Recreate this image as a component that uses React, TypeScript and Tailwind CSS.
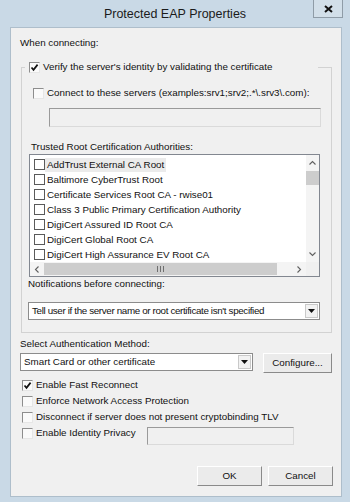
import React from "react";

const certs = [
  "AddTrust External CA Root",
  "Baltimore CyberTrust Root",
  "Certificate Services Root CA - rwise01",
  "Class 3 Public Primary Certification Authority",
  "DigiCert Assured ID Root CA",
  "DigiCert Global Root CA",
  "DigiCert High Assurance EV Root CA",
];

function Tick() {
  return (
    <svg width="9" height="9" viewBox="0 0 9 9">
      <path d="M1.5 4.5 L3.5 6.8 L7.6 1.6" fill="none" stroke="#111" strokeWidth="1.7" />
    </svg>
  );
}

// sunken classic checkbox
function Check({ checked }: { checked?: boolean }) {
  return (
    <span className="flex h-[11px] w-[11px] shrink-0 items-center justify-center border border-t-[#8d8d8d] border-l-[#8d8d8d] border-r-[#e6e6e6] border-b-[#e6e6e6] bg-[#fafafa]">
      {checked && <Tick />}
    </span>
  );
}

function FlatCheck() {
  return <span className="h-[11px] w-[11px] shrink-0 border border-[#5a5a5a] bg-white" />;
}

function Chevron({ dir }: { dir: "up" | "down" | "left" | "right" }) {
  const d = {
    up: "M0.5 4.5 L3.5 1.5 L6.5 4.5",
    down: "M0.5 1.5 L3.5 4.5 L6.5 1.5",
    left: "M4.5 0.5 L1.5 3.5 L4.5 6.5",
    right: "M1.5 0.5 L4.5 3.5 L1.5 6.5",
  }[dir];
  const vertical = dir === "up" || dir === "down";
  return (
    <svg width={vertical ? 7 : 6} height={vertical ? 6 : 7} viewBox={vertical ? "0 0 7 6" : "0 0 6 7"}>
      <path d={d} fill="none" stroke="#606060" strokeWidth="1.1" />
    </svg>
  );
}

function Combo({ text, width, tight }: { text: string; width: string; tight?: boolean }) {
  return (
    <div className={`flex h-[18px] ${width} items-center border border-[#8c8c8c] bg-white p-[1px]`}>
      <span className={tight ? "flex-1 truncate pl-[2px] tracking-[-0.35px]" : "flex-1 truncate pl-[2px]"}>{text}</span>
      <span className="flex h-full w-[13px] items-center justify-center border border-[#c9c9c9] bg-[#f2f2f2]">
        <svg width="7" height="4" viewBox="0 0 7 4">
          <path d="M0 0 H7 L3.5 4 Z" fill="#111" />
        </svg>
      </span>
    </div>
  );
}

function Button({ label, width }: { label: string; width: string }) {
  return (
    <div className={`flex h-[20px] ${width} items-center justify-center border border-t-white border-l-white border-r-[#8a8a8a] border-b-[#8a8a8a] bg-[#ebebeb]`}>
      {label}
    </div>
  );
}

export default function App() {
  return (
    <div className="flex h-[502px] w-[350px] flex-col overflow-hidden bg-[#c9d9e6] font-['Liberation_Sans',Arial,sans-serif] text-[9.8px] leading-[14px] text-[#111]">
      {/* Title bar */}
      <div className="grid h-[27px] shrink-0 grid-cols-[37px_1fr_37px]">
        <div />
        <div className="pt-[6px] text-center text-[12.5px] leading-[16px] text-[#1b1b1b]">
          Protected EAP Properties
        </div>
        <div className="flex h-[19px] w-[30px] -translate-y-px items-center justify-center border border-[#8f9ca7] bg-[#d2dfe9]">
          <svg width="9" height="8" viewBox="0 0 9 8">
            <path d="M1 1 L8 7 M8 1 L1 7" stroke="#111" strokeWidth="2" />
          </svg>
        </div>
      </div>

      {/* Client area */}
      <div className="ml-[10px] flex h-[470px] w-[332px] flex-col border border-[#aebecb] bg-[#f0f0f0]">
        <div className="ml-[9px] mt-[8px] h-[14px]">When connecting:</div>

        <fieldset className="ml-[10px] mt-[10px] w-[311px] border border-[#d2d2d2] pb-[12px]">
          <legend className="ml-[3px] flex h-[14px] w-[293px] items-center gap-[3px] pl-[4px]">
            <Check checked />
            <span>Verify the server's identity by validating the certificate</span>
          </legend>

          <div className="ml-[11px] mt-[12px] flex h-[14px] items-center gap-[3px]">
            <Check />
            <span>Connect to these servers (examples:srv1;srv2;.*\.srv3\.com):</span>
          </div>

          <div className="ml-[27px] mt-[8px] h-[19px] w-[272px] border border-t-[#9a9a9a] border-l-[#9a9a9a] border-r-[#dadada] border-b-[#dadada] bg-[#f0f0f0]" />

          <div className="ml-[9px] mt-[13px] h-[14px]">Trusted Root Certification Authorities:</div>

          {/* Certificate list */}
          <div className="ml-[7px] flex h-[123px] w-[291px] flex-col border border-[#828790] bg-white">
            <div className="flex flex-1">
              <div className="flex-1 overflow-hidden pt-[2px]">
                {certs.map((c, i) => (
                  <div key={c} className="flex h-[15px] items-center whitespace-nowrap pl-[4px]">
                    <FlatCheck />
                    <span className={i === 0 ? "bg-[#ebebeb] pl-[2px] pr-[2px]" : "pl-[2px]"}>{c}</span>
                  </div>
                ))}
              </div>
              <div className="flex w-[13px] flex-col bg-[#f4f4f4]">
                <div className="flex h-[16px] items-center justify-center">
                  <Chevron dir="up" />
                </div>
                <div className="h-[14px] bg-[#cdcdcd]" />
                <div className="flex-1" />
                <div className="flex h-[16px] items-center justify-center">
                  <Chevron dir="down" />
                </div>
              </div>
            </div>
            <div className="flex h-[14px] bg-[#f4f4f4]">
              <div className="flex w-[14px] items-center justify-center">
                <Chevron dir="left" />
              </div>
              <div className="my-[1px] flex w-[233px] items-center justify-center gap-[2px] bg-[#cdcdcd]">
                <span className="h-[6px] w-px bg-[#6f6f6f]" />
                <span className="h-[6px] w-px bg-[#6f6f6f]" />
                <span className="h-[6px] w-px bg-[#6f6f6f]" />
              </div>
              <div className="flex-1" />
              <div className="flex w-[14px] items-center justify-center">
                <Chevron dir="right" />
              </div>
              <div className="w-[13px] bg-[#f0f0f0]" />
            </div>
          </div>

          <div className="ml-[6px] h-[14px]">Notifications before connecting:</div>
          <div className="ml-[6px] mt-[11px]">
            <Combo text="Tell user if the server name or root certificate isn't specified" width="w-[292px]" tight />
          </div>
        </fieldset>

        <div className="ml-[9px] mt-[4px] h-[14px]">Select Authentication Method:</div>
        <div className="ml-[9px] mt-[2px] flex items-start gap-[10px]">
          <Combo text="Smart Card or other certificate" width="w-[233px]" />
          <Button label="Configure..." width="w-[69px]" />
        </div>

        <div className="ml-[11px] mt-[4px] flex flex-col">
          <div className="flex h-[16px] items-center gap-[3px]">
            <Check checked />
            <span>Enable Fast Reconnect</span>
          </div>
          <div className="flex h-[16px] items-center gap-[3px]">
            <Check />
            <span>Enforce Network Access Protection</span>
          </div>
          <div className="flex h-[16px] items-center gap-[3px]">
            <Check />
            <span>Disconnect if server does not present cryptobinding TLV</span>
          </div>
          <div className="flex items-start">
            <div className="flex h-[16px] w-[125px] items-center gap-[3px]">
              <Check />
              <span>Enable Identity Privacy</span>
            </div>
            <div className="mt-[2px] h-[18px] w-[147px] border border-t-[#9a9a9a] border-l-[#9a9a9a] border-r-[#dadada] border-b-[#dadada] bg-[#f0f0f0]" />
          </div>
        </div>

        <div className="mt-[21px] flex justify-end gap-[6px] pr-[8px]">
          <Button label="OK" width="w-[65px]" />
          <Button label="Cancel" width="w-[65px]" />
        </div>
      </div>
    </div>
  );
}
